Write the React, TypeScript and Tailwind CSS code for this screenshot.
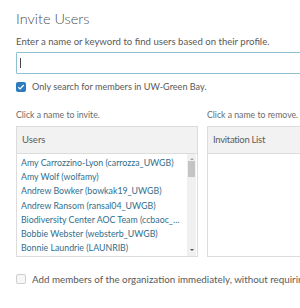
import React from "react";

const users = [
  "Amy Carrozzino-Lyon (carrozza_UWGB)",
  "Amy Wolf (wolfamy)",
  "Andrew Bowker (bowkak19_UWGB)",
  "Andrew Ransom (ransal04_UWGB)",
  "Biodiversity Center AOC Team (ccbaoc_UWGB)",
  "Bobbie Webster (websterb_UWGB)",
  "Bonnie Laundrie (LAUNRIB)",
  "Brian Smith (smithb_UWGB)",
];

export default function App() {
  return (
    <div
      className="w-[300px] h-[308px] overflow-hidden bg-white text-[#595959]"
      style={{ fontFamily: "Lato, 'Noto Sans', sans-serif" }}
    >
      <div className="pl-4 pt-[9px] w-[420px]">
        <h1 className="text-[14.5px] leading-[20px] font-light text-[#4c4c4c]">Invite Users</h1>
        <p className="mt-[6px] text-[9.6px] leading-[14px] text-[#595959]">
          Enter a name or keyword to find users based on their profile.
        </p>
        <div className="mt-[3px] h-[22px] w-[320px] border border-[#8fbfd3] rounded-[1px] flex items-center pl-[3px]">
          <div className="w-px h-[10px] bg-[#444]" />
        </div>
        <div className="mt-[6px] flex items-center gap-[6px] h-[14px]">
          <div className="shrink-0 w-[10px] h-[10px] rounded-[2px] bg-[#2d7cbf] flex items-center justify-center">
            <svg width="8" height="8" viewBox="0 0 8 8">
              <path d="M1.3 4.2 L3.1 5.9 L6.7 2" stroke="white" strokeWidth="1.3" fill="none" />
            </svg>
          </div>
          <span className="text-[9.1px] leading-[14px]">Only search for members in UW-Green Bay.</span>
        </div>
        <div className="mt-[15px] flex gap-[9px] text-[8.7px] leading-[12px] text-[#6b6b6b]">
          <span className="w-[182px]">Click a name to invite.</span>
          <span>Click a name to remove.</span>
        </div>
        <div className="mt-[5px] flex gap-[9px]">
          <div className="w-[182px] h-[131px] border border-[#dcdcdc] flex flex-col">
            <div className="h-[27px] bg-[#f2f2f2] border-b border-[#dcdcdc] flex items-center pl-[5px] text-[9.5px] text-[#5c5c5c]">
              Users
            </div>
            <div className="flex-1 flex min-h-0">
              <div className="flex-1 min-w-0 pl-[4px] pt-[2px] overflow-hidden">
                {users.map((u) => (
                  <div key={u} className="h-[14.2px] leading-[14.2px] text-[8.8px] text-[#2f6e8c] truncate pr-[5px]">
                    {u}
                  </div>
                ))}
              </div>
              <div className="w-[9px] mr-[1px] bg-[#f0f0f0] flex flex-col items-center">
                <div className="h-[6px] flex items-end">
                  <div className="w-0 h-0 border-l-[2px] border-r-[2px] border-b-[2px] border-l-transparent border-r-transparent border-b-[#a3a3a3]" />
                </div>
                <div className="mt-[1px] w-[7px] h-[16px] bg-[#c4c4c4]" />
                <div className="flex-1" />
                <div className="h-[6px] mb-[1px] flex items-start">
                  <div className="w-0 h-0 border-l-[2px] border-r-[2px] border-t-[2px] border-l-transparent border-r-transparent border-t-[#505050]" />
                </div>
              </div>
            </div>
          </div>
          <div className="w-[182px] h-[131px] border border-[#dcdcdc] flex flex-col">
            <div className="h-[27px] bg-[#f2f2f2] border-b border-[#dcdcdc] flex items-center pl-[5px] text-[9.5px] tracking-[-0.3px] text-[#5c5c5c]">
              Invitation List
            </div>
          </div>
        </div>
        <div className="mt-[15px] flex items-center gap-[6px] h-[14px]">
          <div className="shrink-0 w-[10px] h-[10px] rounded-[2px] border border-[#cfcfcf] bg-[#f7f7f7]" />
          <span className="text-[9.8px] leading-[14px] text-[#595959] whitespace-nowrap">
            Add members of the organization immediately, without requiring them to accept the invitation.
          </span>
        </div>
      </div>
    </div>
  );
}
